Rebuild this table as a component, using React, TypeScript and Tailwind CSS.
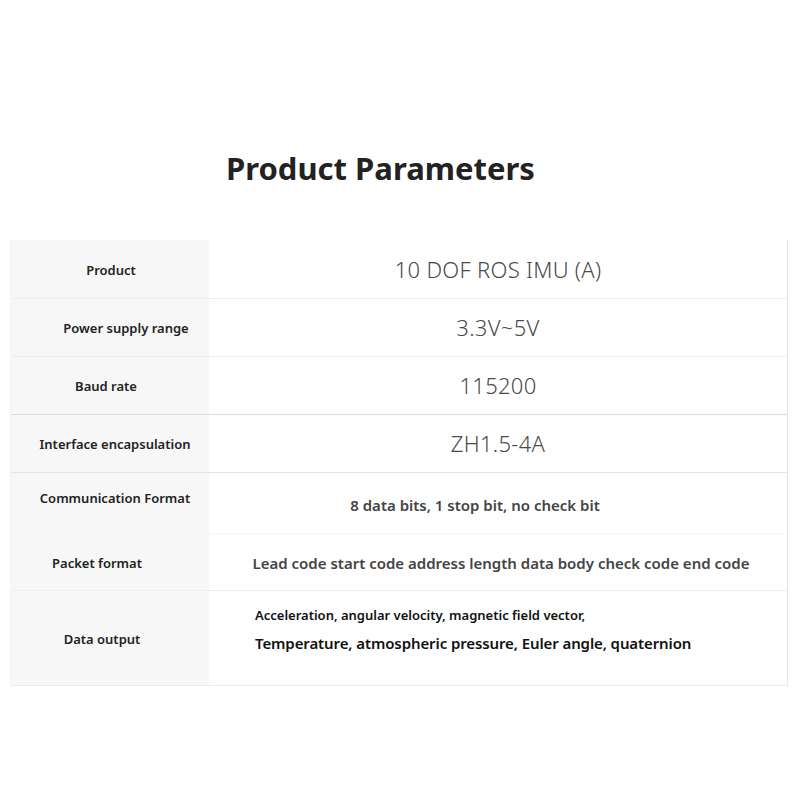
import React from "react";

type Row = {
  label: string;
  h: string;
  line: string;
  labelPad: string;
  value: React.ReactNode;
};

const valueCls = "text-[22px] font-light text-[#4a4a4a] tracking-[0.3px]";

const rows: Row[] = [
  {
    label: "Product",
    h: "h-[59px]",
    line: "border-[#ededed]",
    labelPad: "pl-[2px] pt-[3px]",
    value: <span className={valueCls}>10 DOF ROS IMU (A)</span>,
  },
  {
    label: "Power supply range",
    h: "h-[58px]",
    line: "border-[#ededed]",
    labelPad: "pl-[32px] pt-[2px]",
    value: <span className={valueCls}>3.3V~5V</span>,
  },
  {
    label: "Baud rate",
    h: "h-[58px]",
    line: "border-[#dcdcdc]",
    labelPad: "pr-[8px] pt-[3px]",
    value: <span className={valueCls}>115200</span>,
  },
  {
    label: "Interface encapsulation",
    h: "h-[58px]",
    line: "border-[#e3e3e3]",
    labelPad: "pl-[10px] pt-[3px]",
    value: <span className={valueCls}>ZH1.5-4A</span>,
  },
  {
    label: "Communication Format",
    h: "h-[61px]",
    line: "border-[#f6f6f6]",
    labelPad: "pl-[10px] pb-[8px]",
    value: (
      <span className="text-[15px] font-semibold text-[#444] pr-[46px] pt-[4px]">
        8 data bits, 1 stop bit, no check bit
      </span>
    ),
  },
  {
    label: "Packet format",
    h: "h-[57px]",
    line: "border-[#eeeeee]",
    labelPad: "pr-[26px] pt-[3px]",
    value: (
      <span className="text-[15px] font-semibold text-[#444] pl-[6px] pt-[2px]">
        Lead code start code address length data body check code end code
      </span>
    ),
  },
];

export default function App() {
  return (
    <div
      className="w-[800px] h-[800px] bg-white overflow-hidden"
      style={{ fontFamily: '"Noto Sans", "Open Sans", sans-serif' }}
    >
      <h1 className="pt-[148px] pl-[226px] text-[31px] leading-[40px] font-bold text-[#222]">
        Product Parameters
      </h1>

      <div className="mt-[52px] ml-[10px] w-[778px] border-r border-[#e6e6e6] border-l border-l-[#f5f5f5]">
        {rows.map((r) => (
          <div key={r.label} className={`grid grid-cols-[198px_1fr] border-b ${r.line} ${r.h}`}>
            <div
              className={`bg-[#f7f7f7] flex items-center justify-center text-[13px] font-semibold text-[#222] ${r.labelPad}`}
            >
              {r.label}
            </div>
            <div className="flex items-center justify-center">{r.value}</div>
          </div>
        ))}

        <div className="grid grid-cols-[198px_1fr] border-b border-[#ebebeb] h-[95px]">
          <div className="bg-[#f7f7f7] flex items-center justify-center text-[13px] font-semibold text-[#222] pr-[16px] pt-[4px]">
            Data output
          </div>
          <div className="flex flex-col justify-center pl-[46px] pb-[18px] text-[#111] font-semibold">
            <div className="text-[13px] leading-[20px]">
              Acceleration, angular velocity, magnetic field vector,
            </div>
            <div className="text-[15px] leading-[22px] mt-[7px] tracking-[-0.1px]">
              Temperature, atmospheric pressure, Euler angle, quaternion
            </div>
          </div>
        </div>
      </div>
    </div>
  );
}
